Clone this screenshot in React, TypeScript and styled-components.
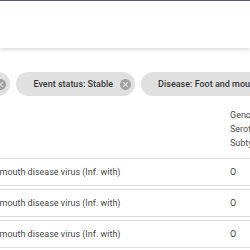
import React from 'react';
import styled, { createGlobalStyle } from 'styled-components';

const GlobalStyle = createGlobalStyle`
  html, body {
    margin: 0;
    padding: 0;
    background: #ffffff;
    overflow: hidden;
  }
  body {
    font-family: Roboto, "Liberation Sans", Arial, sans-serif;
    color: rgba(0, 0, 0, 0.8);
  }
`;

const TopBar = styled.header`
  height: 47px;
  border-top: 1px solid #5b5b7a;
  background: #ffffff;
  box-shadow: 0 2px 4px rgba(0, 0, 0, 0.14);
  position: relative;
  z-index: 1;
`;

const Viewport = styled.main`
  width: 100%;
  overflow: hidden;
`;

/* the page is scrolled sideways in the screenshot */
const Canvas = styled.div<{ scrollX: number }>`
  margin-left: ${({ scrollX }) => -scrollX}px;
  width: 900px;
  padding: 24px 0 0 16px;
`;

const ChipRow = styled.div`
  display: flex;
  gap: 6px;
  height: 24px;
`;

const Chip = styled.div`
  display: inline-flex;
  align-items: center;
  flex-shrink: 0;
  height: 24px;
  border-radius: 12px;
  background: #e0e0e0;
  padding: 0 4px 0 17px;
  gap: 7px;
  white-space: nowrap;
`;

const ChipLabel = styled.span`
  font-size: 9px;
  font-weight: 500;
  color: rgba(0, 0, 0, 0.8);
`;

const DeleteIcon = styled.svg`
  width: 11px;
  height: 11px;
  color: rgba(0, 0, 0, 0.28);
  fill: currentColor;
`;

const Table = styled.div`
  margin-top: 12px;
`;

const HeaderRow = styled.div<{ cols: string }>`
  display: grid;
  grid-template-columns: ${({ cols }) => cols};
  padding-bottom: 8px;
`;

const HeadCell = styled.div`
  padding-left: 10px;
  font-size: 9px;
  line-height: 14px;
  color: rgba(0, 0, 0, 0.75);
`;

const BodyRow = styled.div<{ cols: string }>`
  display: grid;
  grid-template-columns: ${({ cols }) => cols};
  align-items: center;
  height: 26px;
  border-top: 1px solid #dcdcdc;
  border-bottom: 1px solid #dcdcdc;
  margin-bottom: 3px;
`;

const Cell = styled.div`
  padding-left: 10px;
  font-size: 9px;
  color: rgba(0, 0, 0, 0.78);
  white-space: nowrap;
`;

const CancelIcon = () => (
  <DeleteIcon viewBox="2 2 20 20">
    <path d="M12 2C6.47 2 2 6.47 2 12s4.47 10 10 10 10-4.47 10-10S17.53 2 12 2zm5 13.59L15.59 17 12 13.41 8.41 17 7 15.59 10.59 12 7 8.41 8.41 7 12 10.59 15.59 7 17 8.41 13.41 12 17 15.59z" />
  </DeleteIcon>
);

const filters = [
  'Country: Israel',
  'Event status: Stable',
  'Disease: Foot and mouth disease virus (Inf. with)',
];

const columns = '39px 268px 60px 1fr';

const rows = [
  { id: '1', disease: 'Foot and mouth disease virus (Inf. with)', type: 'O', species: 'Cattle' },
  { id: '2', disease: 'Foot and mouth disease virus (Inf. with)', type: 'O', species: 'Cattle' },
  { id: '3', disease: 'Foot and mouth disease virus (Inf. with)', type: 'O', species: 'Sheep' },
];

export default function App() {
  return (
    <>
      <GlobalStyle />
      <TopBar />
      <Viewport>
        <Canvas scrollX={103}>
          <ChipRow>
            {filters.map((f) => (
              <Chip key={f}>
                <ChipLabel>{f}</ChipLabel>
                <CancelIcon />
              </Chip>
            ))}
          </ChipRow>

          <Table>
            <HeaderRow cols={columns}>
              <HeadCell>#</HeadCell>
              <HeadCell>Disease</HeadCell>
              <HeadCell>Genotype/ Serotype/ Subtype</HeadCell>
              <HeadCell>Species</HeadCell>
            </HeaderRow>
            {rows.map((r) => (
              <BodyRow key={r.id} cols={columns}>
                <Cell>{r.id}</Cell>
                <Cell>{r.disease}</Cell>
                <Cell>{r.type}</Cell>
                <Cell>{r.species}</Cell>
              </BodyRow>
            ))}
          </Table>
        </Canvas>
      </Viewport>
    </>
  );
}
